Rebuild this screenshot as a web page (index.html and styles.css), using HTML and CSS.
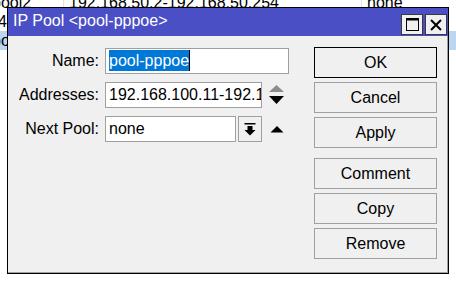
FILE: index.html
```html
<!DOCTYPE html>
<html lang="en">
<head>
    <meta charset="UTF-8">
    <title>IP Pool</title>
    <link rel="stylesheet" href="styles.css">
</head>
<body>

    <!-- pool list behind the dialog -->
    <div class="pool-list">
        <div class="pool-row">
            <div class="cell name">pool2</div>
            <div class="cell ranges">192.168.50.2-192.168.50.254</div>
            <div class="cell next">none</div>
        </div>
        <div class="pool-row">
            <div class="cell name short">4</div>
            <div class="cell ranges">192.168.40.2-192.168.40.254</div>
            <div class="cell next">none</div>
        </div>
        <div class="pool-row selected">
            <div class="cell name">pool-pppoe</div>
            <div class="cell ranges">192.168.100.11-192.168.100.254</div>
            <div class="cell next">none</div>
        </div>
    </div>

    <div class="dialog">
        <div class="title-bar">
            <span class="title">IP Pool &lt;pool-pppoe&gt;</span>
            <div class="title-buttons">
                <button class="title-btn">
                    <svg width="13" height="13" viewBox="0 0 13 13"><rect x="0.5" y="0.5" width="12" height="12" fill="none" stroke="#000"/><rect x="0" y="0" width="13" height="2.5" fill="#000"/></svg>
                </button>
                <button class="title-btn">
                    <svg width="12" height="12" viewBox="0 0 12 12"><path d="M1 1 L11 11 M11 1 L1 11" stroke="#000" stroke-width="2"/></svg>
                </button>
            </div>
        </div>

        <div class="dialog-body">
            <div class="form">
                <label class="field-label">Name:</label>
                <div class="field">
                    <div class="input name-input"><span class="sel">pool-pppoe</span></div>
                </div>

                <label class="field-label">Addresses:</label>
                <div class="field">
                    <div class="input addr-input">192.168.100.11-192.168.100.254</div>
                    <svg class="spinner" width="17" height="20" viewBox="0 0 17 20"><path d="M8.5 0 L16 7 L1 7 Z" fill="#8c8c8c"/><path d="M1 11 L16 11 L8.5 19 Z" fill="#000"/></svg>
                </div>

                <label class="field-label">Next Pool:</label>
                <div class="field">
                    <div class="input next-input">none</div>
                    <button class="drop-btn">
                        <svg width="12" height="13" viewBox="0 0 12 13"><rect x="0.5" y="0" width="11" height="1.5" fill="#000"/><path d="M3.5 3 L8.5 3 L8.5 7 L11.5 7 L6 12.5 L0.5 7 L3.5 7 Z" fill="#000"/></svg>
                    </button>
                    <svg class="up-tri" width="14" height="7" viewBox="0 0 14 7"><path d="M7 0 L13.5 6.5 L0.5 6.5 Z" fill="#000"/></svg>
                </div>
            </div>

            <div class="actions">
                <button class="btn default">OK</button>
                <button class="btn">Cancel</button>
                <button class="btn">Apply</button>
                <button class="btn spaced">Comment</button>
                <button class="btn">Copy</button>
                <button class="btn">Remove</button>
            </div>
        </div>
    </div>

</body>
</html>
```

FILE: styles.css
```css
body {
    font-family: "Liberation Sans", Arial, sans-serif;
    font-size: 16px;
    margin: 0;
    background: #ffffff;
    width: 456px;
    height: 282px;
    overflow: hidden;
    position: relative;
    color: #000;
}

/* list behind */
.pool-list {
    margin-top: -7px;
    margin-left: -8px;
}
.pool-row {
    display: flex;
    height: 19px;
    line-height: 19px;
    white-space: nowrap;
}
.pool-row.selected {
    background: #bcd6f2;
}
.cell {
    overflow: hidden;
}
.cell.name {
    width: 71px;
    border-right: 1px solid #e2e2e2;
}
.cell.name.short {
    padding-left: 6px;
    width: 65px;
}
.cell.ranges {
    width: 292px;
    padding-left: 5px;
    border-right: 1px solid #e2e2e2;
}
.cell.next {
    padding-left: 5px;
}

/* dialog window */
.dialog {
    position: absolute;
    left: 7px;
    top: 7px;
    width: 440px;
    border: 1px solid #000;
    display: flex;
    flex-direction: column;
}
.title-bar {
    height: 27px;
    background: #4b4fc6;
    display: flex;
    justify-content: space-between;
    align-items: flex-end;
    padding: 0 1px 1px 5px;
}
.title {
    color: #fff;
    align-self: center;
    font-size: 16px;
    margin-top: -1px;
}
.title-buttons {
    display: flex;
    gap: 2px;
}
.title-btn {
    width: 22px;
    height: 21px;
    padding: 0;
    border: 1px solid #3a3a3a;
    background: #f0f0f0;
    display: flex;
    align-items: center;
    justify-content: center;
}

.dialog-body {
    height: 236px;
    background: #f0f0f0;
    border-right: 1px solid #a0a0a0;
    border-bottom: 1px solid #a0a0a0;
    display: flex;
    padding-top: 11px;
    box-sizing: border-box;
    height: 237px;
}

.form {
    display: grid;
    grid-template-columns: 91px auto;
    column-gap: 6px;
    row-gap: 8px;
    grid-auto-rows: 26px;
    margin-top: 1px;
    width: 281px;
    align-content: start;
}
.field-label {
    text-align: right;
    line-height: 26px;
}
.field {
    display: flex;
    align-items: center;
}
.input {
    height: 26px;
    box-sizing: border-box;
    border: 1px solid #a0a0a0;
    background: #fff;
    line-height: 24px;
    padding-left: 3px;
    white-space: nowrap;
    overflow: hidden;
}
.name-input {
    width: 184px;
}
.sel {
    background: #0078d7;
    color: #fff;
    border-right: 1px solid #000;
    padding: 2px 0;
}
.addr-input {
    width: 157px;
}
.spinner {
    margin-left: 6px;
}
.next-input {
    width: 131px;
}
.drop-btn {
    width: 24px;
    height: 26px;
    margin-left: 2px;
    padding: 0;
    border: 1px solid #a0a0a0;
    background: #f0f0f0;
    display: flex;
    align-items: center;
    justify-content: center;
}
.up-tri {
    margin-left: 8px;
    margin-top: 1px;
}

.actions {
    display: flex;
    flex-direction: column;
    gap: 4px;
    margin-left: 25px;
}
.btn {
    width: 123px;
    height: 31px;
    border: 1px solid #a0a0a0;
    background: #f0f0f0;
    font-family: "Liberation Sans", Arial, sans-serif;
    font-size: 16px;
    padding: 0;
    color: #000;
}
.btn.default {
    border-color: #000;
}
.btn.spaced {
    margin-top: 6px;
}
```
